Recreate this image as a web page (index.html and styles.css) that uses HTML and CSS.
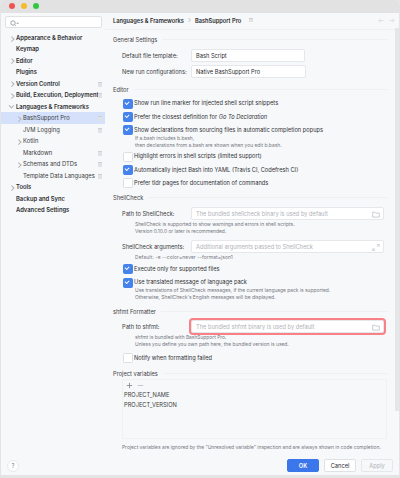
FILE: index.html
```html
<!DOCTYPE html>
<html lang="en">
<head>
  <meta charset="UTF-8" />
  <title>Settings</title>
  <link rel="stylesheet" href="styles.css">
</head>
<body>
  <div class="window">
    <div class="titlebar">
      <span class="light red"></span>
      <span class="light yellow"></span>
      <span class="light green"></span>
    </div>
    <div class="columns">
      <aside class="sidebar">
        <div class="search">
          <svg width="9" height="7" viewBox="0 0 9 7"><circle cx="3" cy="3" r="2.2" fill="none" stroke="#8c8f96" stroke-width=".8"/><path d="M4.7 4.7L6 6M6.8 3h1.6L7.6 4z" stroke="#8c8f96" stroke-width=".6" fill="none"/></svg>
        </div>
        <ul class="tree">
          <li class="node strong arrow">Appearance &amp; Behavior</li>
          <li class="node strong">Keymap</li>
          <li class="node strong arrow">Editor</li>
          <li class="node strong">Plugins</li>
          <li class="node strong arrow pin">Version Control</li>
          <li class="node strong arrow pin">Build, Execution, Deployment</li>
          <li class="node strong arrow open">Languages &amp; Frameworks</li>
          <li class="node sub arrow pin selected">BashSupport Pro</li>
          <li class="node sub pin">JVM Logging</li>
          <li class="node sub arrow">Kotlin</li>
          <li class="node sub pin">Markdown</li>
          <li class="node sub arrow pin">Schemas and DTDs</li>
          <li class="node sub pin">Template Data Languages</li>
          <li class="node strong arrow">Tools</li>
          <li class="node strong">Backup and Sync</li>
          <li class="node strong">Advanced Settings</li>
        </ul>
        <div class="help">?</div>
      </aside>
      <main class="content">
        <header class="crumbs">
          <b>Languages &amp; Frameworks</b>
          <svg class="crumb-sep" width="5" height="6" viewBox="0 0 5 6"><path d="M1.5 1l2 2-2 2" fill="none" stroke="#a8abb2" stroke-width=".7"/></svg>
          <b>BashSupport Pro</b>
          <span class="pin-icon crumb-pin"></span>
          <span class="nav-arrows">
            <svg width="6" height="5" viewBox="0 0 6 5"><path d="M5.5 2.5H.8M2.6.8L.8 2.5l1.8 1.7" fill="none" stroke="#d2d4d9" stroke-width=".7"/></svg>
            <svg width="6" height="5" viewBox="0 0 6 5"><path d="M.5 2.5h4.7M3.4.8l1.8 1.7-1.8 1.7" fill="none" stroke="#d2d4d9" stroke-width=".7"/></svg>
          </span>
        </header>
        <div class="scrollbar"></div>
        <div class="form">
          <div class="section s-general"><span>General Settings</span></div>
          <div class="row first-row"><label class="lbl">Default file template:</label><div class="input short">Bash Script</div></div>
          <div class="row"><label class="lbl">New run configurations:</label><div class="input shorter">Native BashSupport Pro</div></div>

          <div class="section s-editor"><span>Editor</span></div>
          <div class="check on first-check">Show run line marker for injected shell script snippets</div>
          <div class="check on">Prefer the closest definition for <i>Go To Declaration</i></div>
          <div class="check on">Show declarations from sourcing files in automatic completion popups</div>
          <p class="note n-sourcing">If a.bash includes b.bash,<br>then declarations from a.bash are shown when you edit b.bash.</p>
          <div class="check">Highlight errors in shell scripts (limited support)</div>
          <div class="check on">Automatically inject Bash into YAML (Travis CI, Codefresh CI)</div>
          <div class="check">Prefer tldr pages for documentation of commands</div>

          <div class="section s-shell"><span>ShellCheck</span></div>
          <div class="row r-shell"><label class="lbl">Path to ShellCheck:</label>
            <div class="input wide hint">The bundled shellcheck binary is used by default
              <svg class="folder" width="8" height="7" viewBox="0 0 8 7"><path d="M.7 1.2h2.3l.8.9h3.5v4H.7z" fill="none" stroke="#b4b7bd" stroke-width=".7"/></svg>
            </div>
          </div>
          <p class="note n-field">ShellCheck is supported to show warnings and errors in shell scripts.<br>Version 0.10.0 or later is recommended.</p>
          <div class="row r-args"><label class="lbl">ShellCheck arguments:</label>
            <div class="input wide hint">Additional arguments passed to ShellCheck
              <svg class="folder" width="8" height="7" viewBox="0 0 8 7"><path d="M4.8.6h2.4v2.2M7.2.6L5 2.8M.8 6.4h2.4M.8 6.4V4.2M.8 6.4L3 4.2" fill="none" stroke="#b4b7bd" stroke-width=".6"/></svg>
            </div>
          </div>
          <p class="note n-field n-default">Default: -e --color=never --format=json1</p>
          <div class="check on">Execute only for supported files</div>
          <div class="check on">Use translated message of language pack</div>
          <p class="note n-lang">Use translations of ShellCheck messages, if the current language pack is supported.<br>Otherwise, ShellCheck's English messages will be displayed.</p>

          <div class="section s-shfmt"><span>shfmt Formatter</span></div>
          <div class="row r-shfmt"><label class="lbl">Path to shfmt:</label>
            <div class="input wide hint error">The bundled shfmt binary is used by default
              <svg class="folder" width="8" height="7" viewBox="0 0 8 7"><path d="M.7 1.2h2.3l.8.9h3.5v4H.7z" fill="none" stroke="#b4b7bd" stroke-width=".7"/></svg>
            </div>
          </div>
          <p class="note n-field n-bundled">shfmt is bundled with BashSupport Pro.<br>Unless you define you own path here, the bundled version is used.</p>
          <div class="check">Notify when formatting failed</div>

          <div class="section s-vars"><span>Project variables</span></div>
          <div class="vars">
            <div class="vars-tools">
              <svg width="7" height="7" viewBox="0 0 7 7"><path d="M3.5.8v5.4M.8 3.5h5.4" stroke="#7d8087" stroke-width=".8"/></svg>
              <svg width="7" height="7" viewBox="0 0 7 7"><path d="M.8 3.5h5.4" stroke="#b9bbc1" stroke-width=".8"/></svg>
            </div>
            <div class="var">PROJECT_NAME</div>
            <div class="var">PROJECT_VERSION</div>
          </div>
          <p class="note n-vars">Project variables are ignored by the "Unresolved variable" inspection and are always shown in code completion.</p>
        </div>
        <footer class="buttons">
          <button class="btn primary">OK</button>
          <button class="btn">Cancel</button>
          <button class="btn disabled">Apply</button>
        </footer>
      </main>
    </div>
  </div>
</body>
</html>
```

FILE: styles.css
```css
* {
  box-sizing: border-box;
}

html, body {
  margin: 0;
  height: 100%;
}

body {
  background: #e4e4e6;
  font-family: Inter, "Noto Sans", sans-serif;
  font-size: 5.7px;
  color: #2b2d30;
  overflow: hidden;
}

.window {
  height: 475px;
  margin: 0 1px;
  display: flex;
  flex-direction: column;
  background: #f7f8fa;
  border-radius: 5px 5px 0 0;
  overflow: hidden;
}

.titlebar {
  height: 13px;
  flex: none;
  display: flex;
  align-items: center;
  gap: 6px;
  padding: 0 0 2px 8px;
  background: #e2e2e2;
}

.light {
  width: 6px;
  height: 6px;
  border-radius: 50%;
}
.red { background: #f0524f; }
.yellow { background: #f6bb2d; }
.green { background: #2fc840; }

.columns {
  flex: 1;
  display: flex;
  min-height: 0;
}

.sidebar {
  width: 104px;
  flex: none;
  position: relative;
  padding-top: 3px;
  font-size: 5.85px;
  background: #f7f8fa;
}

.search {
  height: 12px;
  margin: 0 3px 0 4px;
  padding: 2.5px 0 0 4px;
  background: #fff;
  border: 1px solid #dfe1e5;
  border-radius: 2px;
  line-height: 0;
}

.tree {
  list-style: none;
  margin: 4px 0 0;
  padding: 0;
}

.node {
  position: relative;
  height: 11.47px;
  line-height: 11.47px;
  padding-left: 15px;
  white-space: nowrap;
}
.strong { font-weight: 600; }
.sub { padding-left: 22px; color: #3a3c40; }
.selected { background: #d5e1fb; }

.arrow::before {
  content: "";
  position: absolute;
  left: 8.5px;
  top: 4.5px;
  width: 2.5px;
  height: 2.5px;
  border-top: .6px solid #b0b3b9;
  border-right: .6px solid #b0b3b9;
  transform: rotate(45deg);
}
.sub.arrow::before { left: 15.5px; }
.open::before {
  left: 9px;
  top: 3.5px;
  transform: rotate(135deg);
}

.pin::after, .pin-icon {
  content: "";
  display: block;
  width: 4px;
  height: 4px;
  background: #e1e2e6;
  border-top: 1px solid #cdcfd4;
}
.pin::after {
  position: absolute;
  right: 3px;
  top: 4px;
}

.help {
  position: absolute;
  left: 6px;
  bottom: 3px;
  width: 12px;
  height: 12px;
  border: 1px solid #e8e9ec;
  border-radius: 50%;
  background: #fff;
  color: #7d8087;
  text-align: center;
  line-height: 10px;
}

.content {
  flex: 1;
  min-width: 0;
  position: relative;
  display: flex;
  flex-direction: column;
}

.crumbs {
  height: 17px;
  flex: none;
  display: flex;
  align-items: center;
  padding: 0 4px 2px 8px;
  border-bottom: 1px solid #eff0f2;
}
.crumbs b { font-weight: 600; }
.crumb-sep { margin: 0 3px 0 3px; }
.crumb-pin { margin-left: 8px; }
.nav-arrows {
  margin-left: auto;
  display: flex;
  gap: 5px;
}

.scrollbar {
  position: absolute;
  right: 0;
  top: 15px;
  width: 4px;
  height: 383px;
  background: #e5e6e8;
}

.form {
  flex: 1;
  padding: 0 12px 0 8px;
}

.section {
  height: 10px;
  display: flex;
  align-items: center;
  gap: 5px;
  color: #3f4145;
}
.section::after {
  content: "";
  flex: 1;
  border-top: 1px solid #eff0f2;
}
.s-general { margin-top: 4px; }
.s-editor { margin-top: 5px; }
.s-shell { margin-top: 3.6px; }
.s-shfmt { margin-top: 5.5px; }
.s-vars { margin-top: 4.4px; }

.row {
  display: flex;
  align-items: center;
  height: 16px;
  padding-left: 9px;
}
.first-row { margin-top: 3px; }
.r-shell { margin-top: 3px; }
.r-args { margin-top: 3.5px; }
.r-shfmt { margin-top: 2px; }

.lbl {
  width: 69px;
  flex: none;
  color: #3a3c40;
  white-space: nowrap;
}

.input {
  position: relative;
  height: 13px;
  line-height: 11px;
  padding-left: 4px;
  background: #fff;
  border: 1px solid #e6e7ea;
  border-radius: 2px;
  white-space: nowrap;
}
.short { width: 114px; }
.shorter { width: 115px; }
.wide { width: 193px; }
.hint { color: #b0b2b8; }
.error {
  outline: 2px solid #f98086;
}
.folder {
  position: absolute;
  right: 3px;
  top: 3px;
}

.check {
  position: relative;
  height: 13.2px;
  line-height: 13.2px;
  padding-left: 21px;
  color: #303236;
  white-space: nowrap;
}
.first-check { margin-top: 2.4px; }
.check::before {
  content: "";
  position: absolute;
  left: 10px;
  top: 2.6px;
  width: 8px;
  height: 8px;
  border: 1px solid #dcdee2;
  border-radius: 1.5px;
  background: #fff;
}
.check.on::before {
  border-color: #4682ec;
  background: #4682ec;
}
.check.on::after {
  content: "";
  position: absolute;
  left: 12.4px;
  top: 4.6px;
  width: 3.4px;
  height: 2px;
  border-left: .8px solid #fff;
  border-bottom: .8px solid #fff;
  transform: rotate(-45deg);
}

.note {
  margin: 0;
  padding-left: 22px;
  font-size: 4.9px;
  line-height: 7px;
  color: #74777e;
  white-space: nowrap;
}
.n-sourcing { margin: -1px 0 .4px; }
.n-field { margin-top: -.5px; }
.n-default { margin-bottom: .9px; letter-spacing: .1px; }
.n-lang { margin-top: -1.3px; }
.n-bundled { margin-bottom: 2.9px; }

.vars {
  margin: 1px 0 0 9px;
  height: 60px;
  padding: 1px 0 0 1px;
  border: 1px solid #f0f1f3;
}
.vars-tools {
  display: flex;
  gap: 4px;
  height: 8px;
  padding-left: 2px;
  align-items: center;
  margin-bottom: 1px;
}
.var {
  height: 10px;
  line-height: 10px;
  color: #3a3c40;
}
.n-vars {
  margin-top: 4.5px;
  padding-left: 9px;
}

.buttons {
  position: absolute;
  right: 6px;
  bottom: 3px;
  display: flex;
  gap: 5px;
}

.btn {
  width: 32px;
  height: 13px;
  padding: 0;
  font: inherit;
  color: #2b2d30;
  background: #fff;
  border: 1px solid #dfe1e5;
  border-radius: 2px;
}
.primary {
  background: #3b77ea;
  border-color: #3b77ea;
  color: #fff;
  font-weight: 600;
}
.disabled {
  color: #b0b2b8;
  background: #f7f8fa;
  border-color: #e6e7ea;
}
```
